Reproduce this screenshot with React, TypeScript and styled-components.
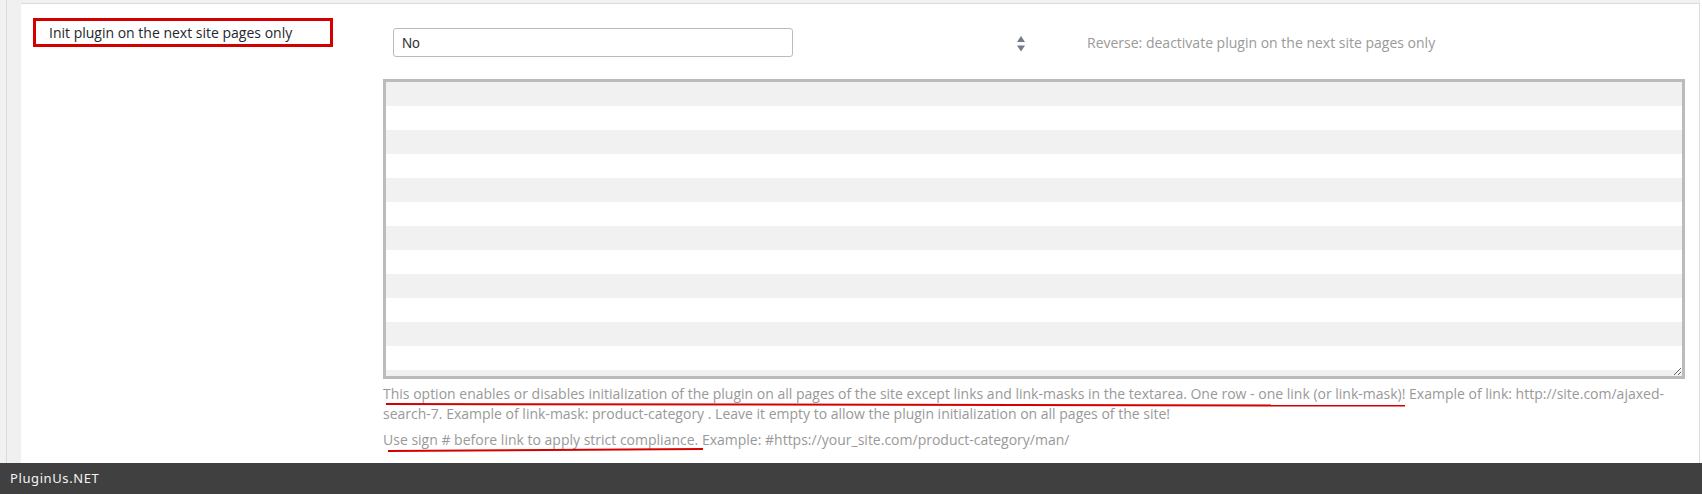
import React from 'react';
import styled, {createGlobalStyle} from 'styled-components';

const GlobalStyle = createGlobalStyle`
html, body {
  margin: 0;
  padding: 0;
  background: #fff;
}
* {
  box-sizing: border-box;
}
`

const Page = styled.div`
width: 1702px;
height: 494px;
display: flex;
flex-direction: column;
background: #fff;
font-family: "Open Sans", "Liberation Sans", sans-serif;
overflow: hidden;
`

const Body = styled.div`
flex: 1;
display: flex;
padding-right: 2px;
`

const Gutter = styled.div`
width: 21px;
flex-shrink: 0;
background: linear-gradient(to right, #f1f1f1 6px, #dcdcdc 6px, #dcdcdc 7px, #f0f0f0 7px);
`

const Main = styled.div`
flex: 1;
display: flex;
flex-direction: column;
border-top: 3px solid #f1f1f1;
`

const Panel = styled.div`
flex: 1;
background: #fff;
border-top: 1px solid #dcdcdc;
border-right: 1px solid #dcdcdc;
padding: 14px 0 0 12px;
display: grid;
grid-template-columns: 350px 1302px;
align-items: start;
`

const Label = styled.div`
width: 300px;
height: 29px;
border: 3px solid #d40000;
padding-left: 13px;
font-size: 14px;
line-height: 23px;
color: #23282d;
`

const Content = styled.div`
padding-top: 10px;
display: flex;
flex-direction: column;
`

const TopRow = styled.div`
display: flex;
align-items: center;
height: 29px;
margin-bottom: 22px;
`

const Select = styled.select`
appearance: none;
-webkit-appearance: none;
margin-left: 10px;
width: 400px;
height: 29px;
border: 1px solid #bbb;
border-radius: 3px;
background: #fff;
padding: 0 0 0 8px;
font-family: "Liberation Sans", Arial, sans-serif;
font-size: 14px;
color: #32373c;
outline: none;
`

const Arrows = styled.svg`
margin-left: 224px;
margin-top: 3px;
flex-shrink: 0;
`

const Hint = styled.span`
margin-left: 62px;
font-size: 14px;
color: #9a9a9a;
`

const LinksArea = styled.textarea`
display: block;
width: 1302px;
height: 300px;
margin: 0;
padding: 0;
border: 3px solid #bbb;
background: repeating-linear-gradient(#f1f1f1 0, #f1f1f1 24px, #fff 24px, #fff 48px);
font-family: "Open Sans", sans-serif;
font-size: 14px;
line-height: 24px;
outline: none;
`

const Note = styled.p<{$gap: number}>`
margin: ${p => p.$gap}px 0 0;
font-size: 14px;
line-height: 20px;
color: #999;
`

const Marked = styled.span<{$left: number; $right: number; $drop: number; $tilt: number}>`
position: relative;
&::after {
  content: "";
  position: absolute;
  left: ${p => p.$left}px;
  right: ${p => p.$right}px;
  bottom: ${p => p.$drop}px;
  height: 2px;
  background: #d60000;
  transform-origin: left center;
  transform: rotate(${p => p.$tilt}deg);
}
`

const Footer = styled.div`
height: 31px;
flex-shrink: 0;
background: #404040;
color: #f4f4f4;
padding-left: 10px;
font-family: "Noto Sans", "DejaVu Sans", sans-serif;
font-size: 13px;
line-height: 31px;
letter-spacing: 0.6px;
`

export default function App() {
    return (
        <Page>
            <GlobalStyle/>
            <Body>
                <Gutter/>
                <Main>
                    <Panel>
                        <Label>Init plugin on the next site pages only</Label>
                        <Content>
                            <TopRow>
                                <Select defaultValue="0">
                                    <option value="0">No</option>
                                    <option value="1">Yes</option>
                                </Select>
                                <Arrows width="8" height="16" viewBox="0 0 8 16">
                                    <path d="M0 6 L4 0 L8 6 Z" fill="#737c8b"/>
                                    <path d="M0 9.5 L8 9.5 L4 15.5 Z" fill="#737c8b"/>
                                </Arrows>
                                <Hint>Reverse: deactivate plugin on the next site pages only</Hint>
                            </TopRow>
                            <LinksArea defaultValue=""/>
                            <Note $gap={5}>
                                <Marked $left={3} $right={0} $drop={-2} $tilt={0.09}>This option enables or disables initialization of the plugin on all pages of the site except links and link-masks in the textarea. One row - one link (or link-mask)!</Marked> Example of link: http://site.com/ajaxed-search-7. Example of link-mask: product-category . Leave it empty to allow the plugin initialization on all pages of the site!
                            </Note>
                            <Note $gap={6}>
                                <Marked $left={5} $right={-5} $drop={-3} $tilt={-0.35}>Use sign # before link to apply strict compliance.</Marked> Example: #https://your_site.com/product-category/man/
                            </Note>
                        </Content>
                    </Panel>
                </Main>
            </Body>
            <Footer>PluginUs.NET</Footer>
        </Page>
    );
}
